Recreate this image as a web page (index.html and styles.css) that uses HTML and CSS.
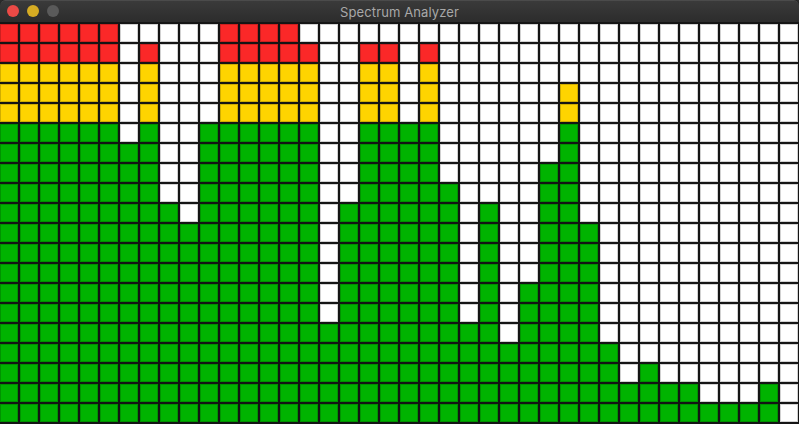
FILE: index.html
```html
<!DOCTYPE html>
<html lang="en">
<head>
    <meta charset="UTF-8">
    <meta name="viewport" content="width=device-width, initial-scale=1.0">
    <title>Spectrum Analyzer</title>
    <link rel="stylesheet" href="styles.css">
</head>
<body>

<div id="window">
    <div id="titleBar">
        <div id="lights">
            <span class="light close"></span>
            <span class="light minimize"></span>
            <span class="light zoom"></span>
        </div>
        <div id="title">Spectrum Analyzer</div>
    </div>

    <div id="analyzer"></div>
</div>

<script>
    const ROWS = 20;
    // top filled row for each band (20 = silent)
    const peaks = [
        0, 0, 0, 0, 0, 0, 6, 1, 9, 10,
        5, 0, 0, 0, 0, 1, 15, 9, 1, 1,
        5, 1, 8, 15, 9, 16, 13, 7, 3, 10,
        16, 18, 17, 18, 18, 19, 19, 19, 18, 20
    ];

    function levelClass(row) {
        if (row < 2) return 'red';
        if (row < 5) return 'yellow';
        return 'green';
    }

    const analyzer = document.getElementById('analyzer');
    peaks.forEach(top => {
        const band = document.createElement('div');
        band.className = 'band';
        for (let row = 0; row < ROWS; row++) {
            const cell = document.createElement('div');
            cell.className = 'cell ' + (row >= top ? levelClass(row) : 'off');
            band.appendChild(cell);
        }
        analyzer.appendChild(band);
    });
</script>

</body>
</html>
```

FILE: styles.css
```css
html, body {
    margin: 0;
    padding: 0;
    overflow: hidden;
    background: #2b2b2b;
}
#window {
    width: 799px;
    height: 424px;
    overflow: hidden;
    border-radius: 5px 5px 0 0;
    background: #151515;
}
#titleBar {
    height: 22px;
    display: flex;
    align-items: center;
    justify-content: center;
    position: relative;
    background: linear-gradient(#3a3a3a, #2c2c2c);
    border-top: 1px solid #4b4b4b;
    box-sizing: border-box;
    border-radius: 5px 5px 0 0;
}
#lights {
    position: absolute;
    left: 7px;
    top: 4px;
    display: flex;
    gap: 8px;
}
.light {
    width: 12px;
    height: 12px;
    border-radius: 50%;
}
.close {
    background: #ec4a46;
}
.minimize {
    background: #d6ac23;
}
.zoom {
    background: #5a5a5a;
}
#title {
    font-family: Inter, "Liberation Sans", sans-serif;
    font-size: 13px;
    color: #a8a8a8;
    letter-spacing: 0.1px;
}
#analyzer {
    display: flex;
    margin: 1px 0 0 -1px;
    background: #111;
}
.band {
    display: flex;
    flex-direction: column;
}
.cell {
    width: 18px;
    height: 18px;
    border: 1px solid #141414;
    box-shadow: inset 0 0 0 1px rgba(0, 0, 0, 0.18);
}
.off {
    background: #ffffff;
}
.red {
    background: #fb2828;
}
.yellow {
    background: #fed400;
}
.green {
    background: #00b300;
}
```
